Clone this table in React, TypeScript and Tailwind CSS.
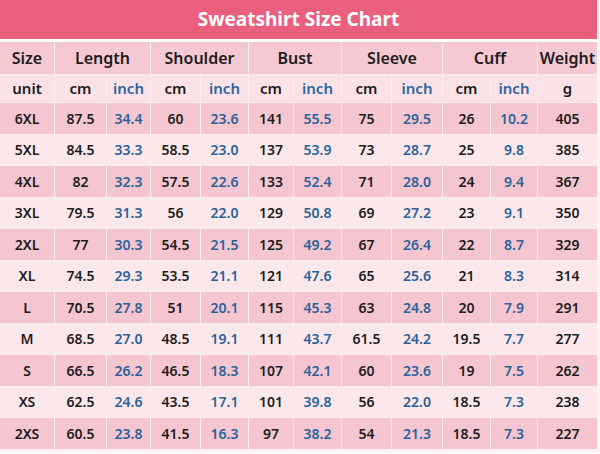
const groups = ["Length", "Shoulder", "Bust", "Sleeve", "Cuff"];

const rows: [string, ...string[]][] = [
  ["6XL", "87.5", "34.4", "60", "23.6", "141", "55.5", "75", "29.5", "26", "10.2", "405"],
  ["5XL", "84.5", "33.3", "58.5", "23.0", "137", "53.9", "73", "28.7", "25", "9.8", "385"],
  ["4XL", "82", "32.3", "57.5", "22.6", "133", "52.4", "71", "28.0", "24", "9.4", "367"],
  ["3XL", "79.5", "31.3", "56", "22.0", "129", "50.8", "69", "27.2", "23", "9.1", "350"],
  ["2XL", "77", "30.3", "54.5", "21.5", "125", "49.2", "67", "26.4", "22", "8.7", "329"],
  ["XL", "74.5", "29.3", "53.5", "21.1", "121", "47.6", "65", "25.6", "21", "8.3", "314"],
  ["L", "70.5", "27.8", "51", "20.1", "115", "45.3", "63", "24.8", "20", "7.9", "291"],
  ["M", "68.5", "27.0", "48.5", "19.1", "111", "43.7", "61.5", "24.2", "19.5", "7.7", "277"],
  ["S", "66.5", "26.2", "46.5", "18.3", "107", "42.1", "60", "23.6", "19", "7.5", "262"],
  ["XS", "62.5", "24.6", "43.5", "17.1", "101", "39.8", "56", "22.0", "18.5", "7.3", "238"],
  ["2XS", "60.5", "23.8", "41.5", "16.3", "97", "38.2", "54", "21.3", "18.5", "7.3", "227"],
];

const cell = "flex items-center justify-center";

export default function App() {
  return (
    <div
      className="w-[600px] h-[454px] overflow-hidden bg-[#fdf3f5]"
      style={{ fontFamily: '"Noto Sans", "Open Sans", sans-serif' }}
    >
      <div className="w-[597px]">
        <div className="h-[39px] bg-[#e95f7d] flex items-center justify-center text-white text-[19px] font-bold">
          Sweatshirt Size Chart
        </div>
        <div className="h-[3px] bg-white" />

        <div className="grid grid-cols-[54px_51px_43px_49px_47px_44px_47px_49px_50px_47px_46px_59px] gap-px bg-[#fcedf0] text-[#1c1c1c]">
          <div className={`${cell} h-[32px] bg-[#f6c9d2] text-[16px] font-semibold`}>Size</div>
          {groups.map((g) => (
            <div key={g} className={`${cell} col-span-2 h-[32px] bg-[#f6c9d2] text-[16px] font-semibold`}>
              {g}
            </div>
          ))}
          <div className={`${cell} h-[32px] bg-[#f6c9d2] text-[16px] font-semibold`}>Weight</div>

          <div className={`${cell} h-[27px] bg-[#fbe2e7] text-[15px] font-semibold`}>unit</div>
          {groups.map((g) => (
            <div key={g} className="contents">
              <div className={`${cell} h-[27px] bg-[#fbe2e7] text-[15px] font-semibold`}>cm</div>
              <div className={`${cell} h-[27px] bg-[#fbe2e7] text-[15px] font-semibold text-[#2a67a0]`}>inch</div>
            </div>
          ))}
          <div className={`${cell} h-[27px] bg-[#fbe2e7] text-[15px] font-semibold`}>g</div>

          {rows.map((r, i) => {
            const bg = i % 2 === 0 ? "bg-[#f5c6d0]" : "bg-[#fce7eb]";
            return r.map((v, j) => (
              <div
                key={`${i}-${j}`}
                className={`${cell} h-[30.5px] ${bg} text-[14px] font-semibold ${
                  j > 0 && j < 11 && j % 2 === 0 ? "text-[#2a6399]" : ""
                }`}
              >
                {v}
              </div>
            ));
          })}
        </div>
      </div>
    </div>
  );
}
